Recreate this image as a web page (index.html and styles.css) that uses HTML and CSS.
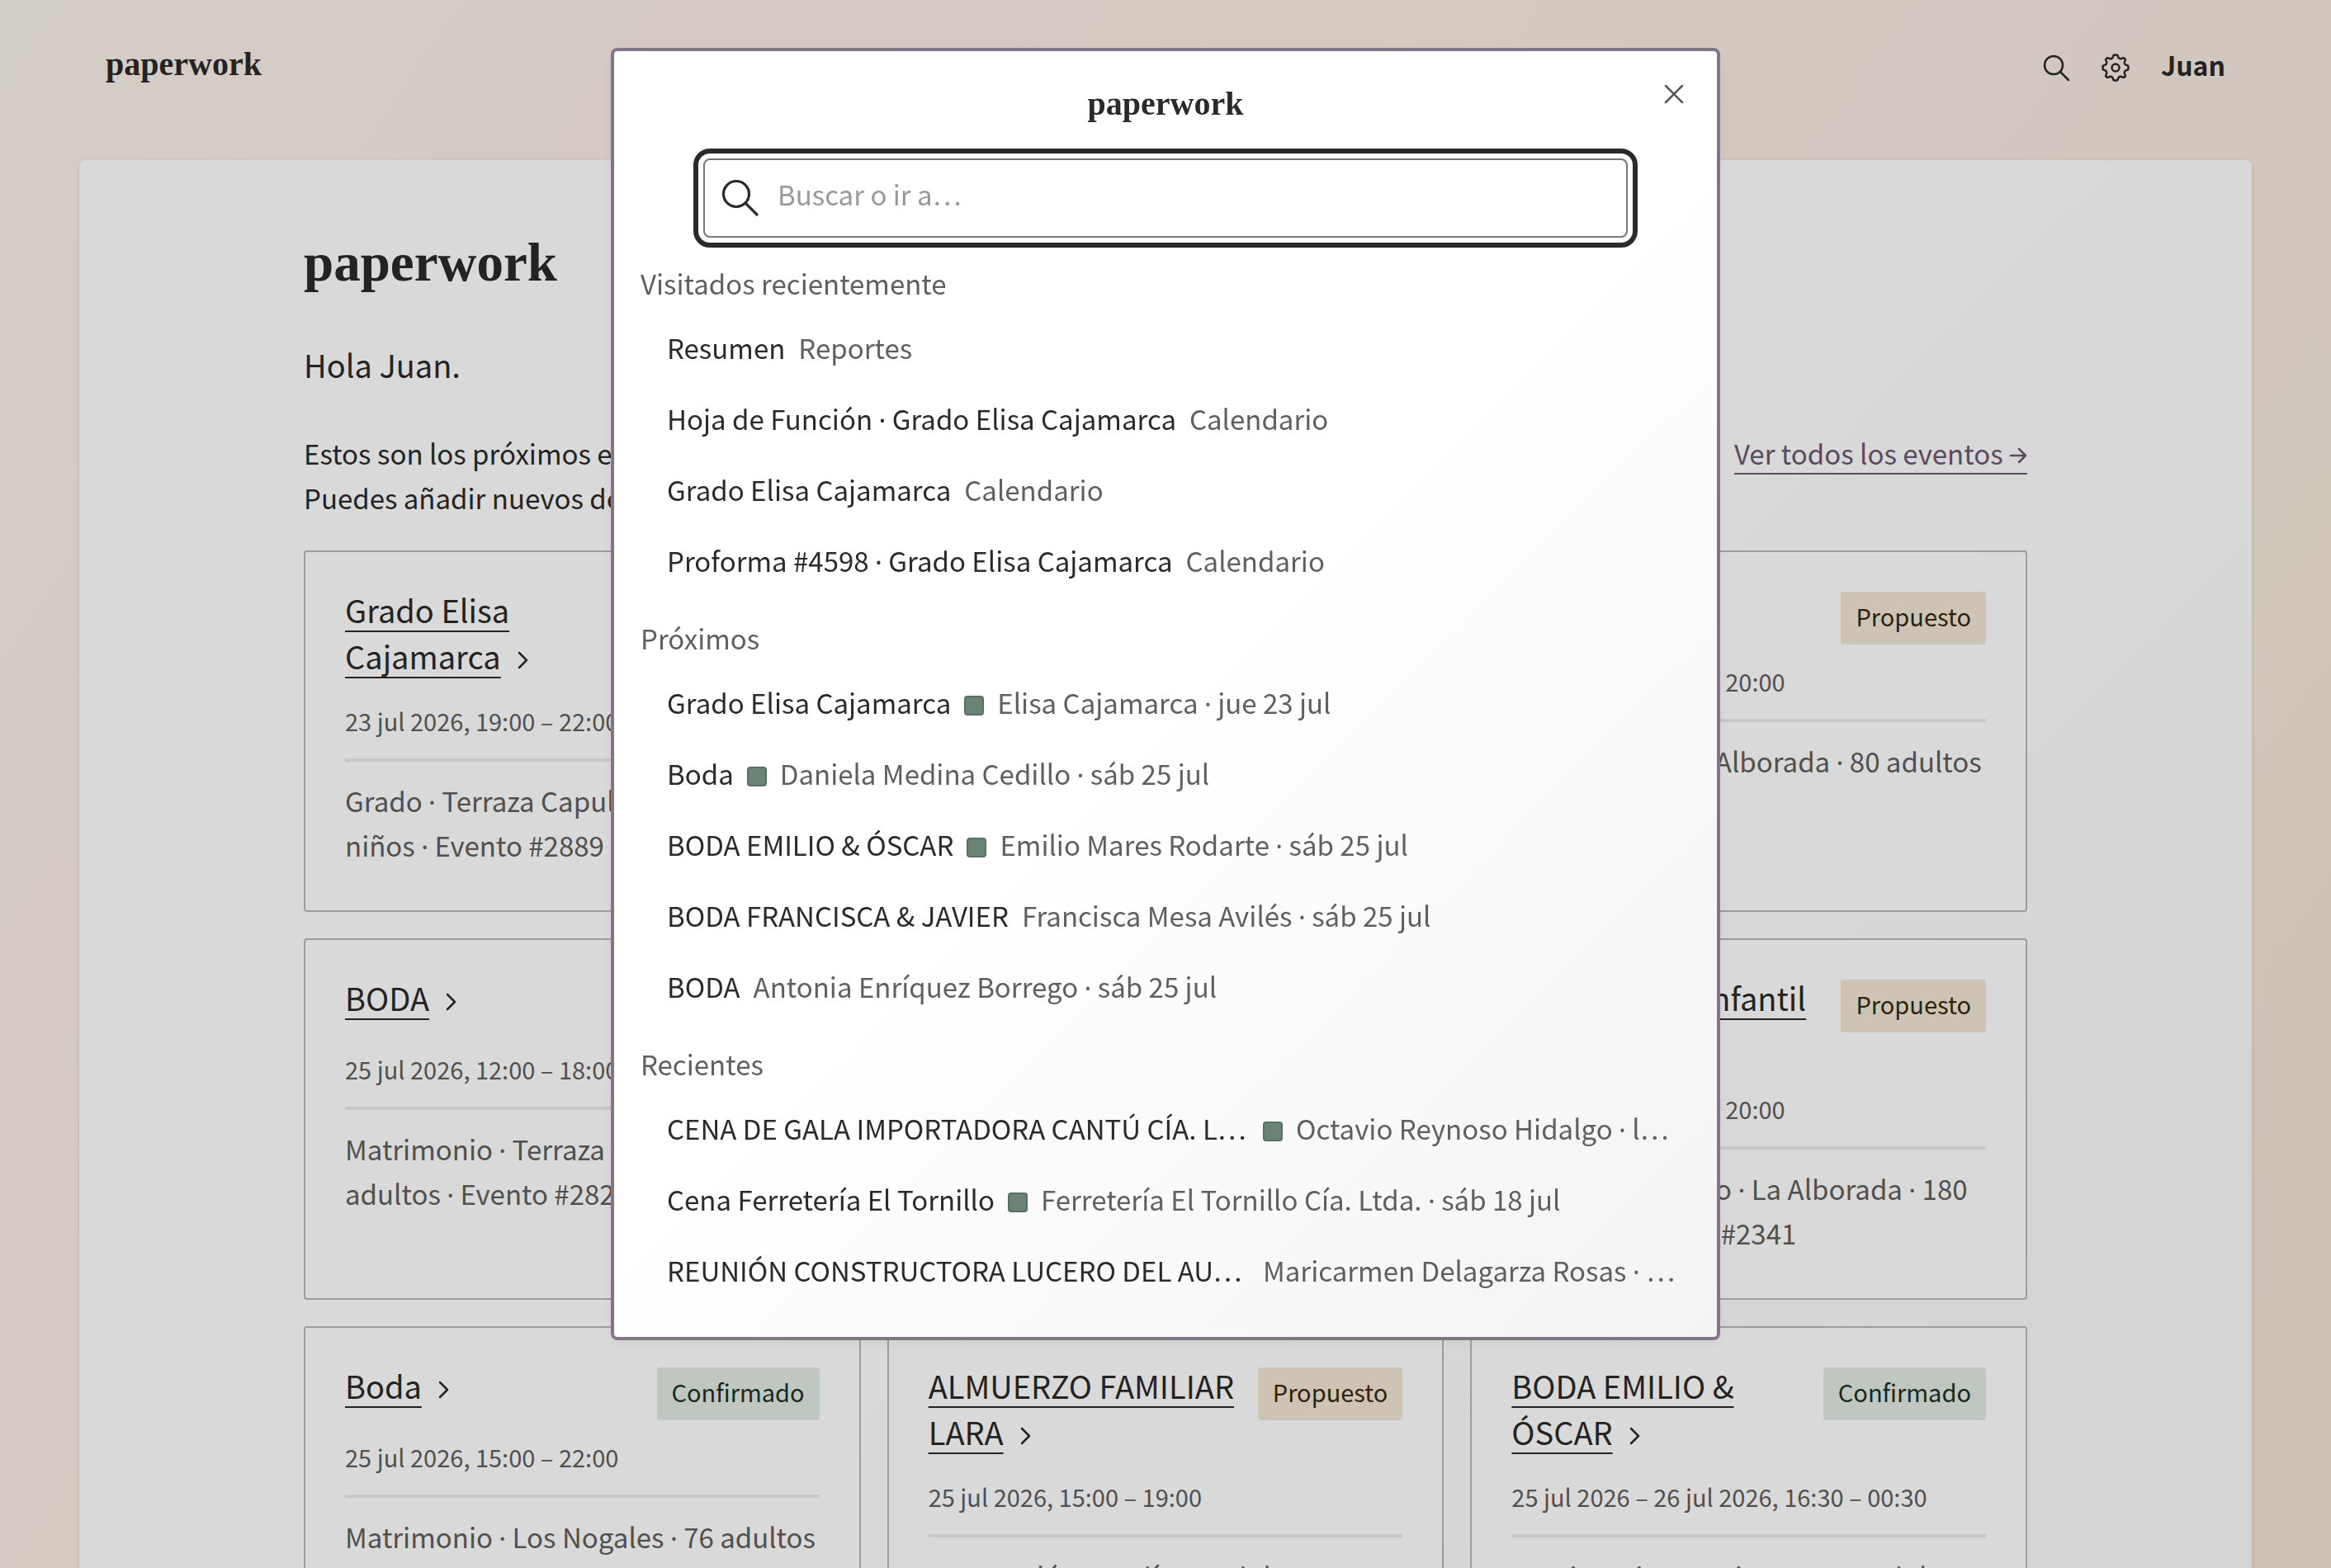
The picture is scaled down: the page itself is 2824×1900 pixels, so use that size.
FILE: index.html
```html
<!DOCTYPE html>
<html lang="es">
<head>
    <meta charset="UTF-8">
    <meta name="viewport" content="width=device-width, initial-scale=1.0">
    <title>paperwork</title>
    <link rel="stylesheet" href="styles.css">
</head>
<body>
    <header class="topbar">
        <a class="logo" href="#">paperwork</a>
        <nav class="topbar-actions">
            <button class="icon-btn" type="button" aria-label="Buscar">
                <svg width="34" height="34" viewBox="0 0 34 34"><circle cx="14" cy="14" r="11"/><path d="M22 22l10 10"/></svg>
            </button>
            <button class="icon-btn" type="button" aria-label="Ajustes">
                <svg width="34" height="34" viewBox="0 0 34 34"><path d="M14 3.5Q14.300 1.500 16 1.500H18Q19.700 1.500 20 3.500Q20.400 5.600 22.400 6.200Q24 6.600 25.300 5.600Q26.900 4.600 28.100 5.900Q29.400 7.100 28.400 8.700Q27.400 10 27.800 11.600Q28.400 13.600 30.500 14Q32.500 14.300 32.500 16V18Q32.500 19.700 30.500 20Q28.400 20.400 27.800 22.400Q27.400 24 28.400 25.300Q29.400 26.900 28.100 28.100Q26.900 29.400 25.300 28.400Q24 27.400 22.400 27.800Q20.400 28.400 20 30.500Q19.700 32.500 18 32.500H16Q14.300 32.500 14 30.500Q13.600 28.400 11.600 27.800Q10 27.400 8.700 28.400Q7.100 29.400 5.900 28.100Q4.600 26.900 5.600 25.300Q6.600 24 6.200 22.400Q5.600 20.400 3.500 20Q1.500 19.700 1.500 18V16Q1.500 14.300 3.500 14Q5.600 13.600 6.200 11.600Q6.600 10 5.600 8.700Q4.600 7.100 5.900 5.900Q7.100 4.600 8.700 5.600Q10 6.600 11.600 6.200Q13.600 5.600 14 3.500Z"/><circle cx="17" cy="17" r="4.500"/></svg>
            </button>
            <a class="user" href="#">Juan</a>
        </nav>
    </header>

    <main class="page">
        <div class="content">
            <h1 class="hero">paperwork</h1>
            <p class="greeting">Hola Juan.</p>
            <div class="intro">
                <p>Estos son los próximos eventos.<br>Puedes añadir nuevos desde aquí.</p>
                <a class="all-link" href="#">Ver todos los eventos <svg width="22" height="22" viewBox="0 0 22 22"><path d="M2 11h18M12 3l8 8-8 8"/></svg></a>
            </div>

            <div class="cards">
                <article class="card">
                    <div class="card-head">
                        <h2><a href="#">Grado Elisa Cajamarca</a><svg class="chevron" width="14" height="22" viewBox="0 0 14 22"><path d="M2 2l9 9-9 9"/></svg></h2>
                        <span class="badge confirmed">Confirmado</span>
                    </div>
                    <p class="date">23 jul 2026, 19:00 – 22:00</p>
                    <p class="detail">Grado <span class="dot">·</span> Terraza Capulí <span class="dot">·</span> 90 <span class="dot">·</span> 12<br>niños <span class="dot">·</span> Evento #2889</p>
                </article>
                <article class="card">
                    <div class="card-head">
                        <h2><a href="#">Boda</a></h2>
                        <span class="badge confirmed">Confirmado</span>
                    </div>
                    <p class="date">25 jul 2026, 12:00 – 18:00</p>
                    <p class="detail">Matrimonio <span class="dot">·</span> Los Nogales</p>
                </article>
                <article class="card">
                    <div class="card-head">
                        <h2><a href="#">Boda</a></h2>
                        <span class="badge proposed">Propuesto</span>
                    </div>
                    <p class="date">25 jul 2026, 12:00 – 20:00</p>
                    <p class="detail">Matrimonio <span class="dot">·</span> La Alborada <span class="dot">·</span> 80 adultos</p>
                </article>
                <article class="card">
                    <div class="card-head">
                        <h2><a href="#">BODA</a><svg class="chevron" width="14" height="22" viewBox="0 0 14 22"><path d="M2 2l9 9-9 9"/></svg></h2>
                        <span class="badge proposed">Propuesto</span>
                    </div>
                    <p class="date">25 jul 2026, 12:00 – 18:00</p>
                    <p class="detail">Matrimonio <span class="dot">·</span> Terraza Capulí <span class="dot">·</span> 60<br>adultos <span class="dot">·</span> Evento #2821</p>
                </article>
                <article class="card">
                    <div class="card-head">
                        <h2><a href="#">Boda</a></h2>
                        <span class="badge proposed">Propuesto</span>
                    </div>
                    <p class="date">25 jul 2026, 12:00 – 18:00</p>
                    <p class="detail">Matrimonio <span class="dot">·</span> Los Nogales</p>
                </article>
                <article class="card">
                    <div class="card-head">
                        <h2><a href="#">Cumpleaños Infantil Zoe</a></h2>
                        <span class="badge proposed">Propuesto</span>
                    </div>
                    <p class="date">25 jul 2026, 15:00 – 20:00</p>
                    <p class="detail">Evento Deportivo <span class="dot">·</span> La Alborada <span class="dot">·</span> 180<br>adultos <span class="dot">·</span> Evento #2341</p>
                </article>
                <article class="card">
                    <div class="card-head">
                        <h2><a href="#">Boda</a><svg class="chevron" width="14" height="22" viewBox="0 0 14 22"><path d="M2 2l9 9-9 9"/></svg></h2>
                        <span class="badge confirmed">Confirmado</span>
                    </div>
                    <p class="date">25 jul 2026, 15:00 – 22:00</p>
                    <p class="detail">Matrimonio <span class="dot">·</span> Los Nogales <span class="dot">·</span> 76 adultos</p>
                </article>
                <article class="card">
                    <div class="card-head">
                        <h2><a href="#">ALMUERZO FAMILIAR LARA</a><svg class="chevron" width="14" height="22" viewBox="0 0 14 22"><path d="M2 2l9 9-9 9"/></svg></h2>
                        <span class="badge proposed">Propuesto</span>
                    </div>
                    <p class="date">25 jul 2026, 15:00 – 19:00</p>
                    <p class="detail">Otro <span class="dot">·</span> Salón Gandí <span class="dot">·</span> 75 adultos</p>
                </article>
                <article class="card">
                    <div class="card-head">
                        <h2><a href="#">BODA EMILIO &amp; ÓSCAR</a><svg class="chevron" width="14" height="22" viewBox="0 0 14 22"><path d="M2 2l9 9-9 9"/></svg></h2>
                        <span class="badge confirmed">Confirmado</span>
                    </div>
                    <p class="date">25 jul 2026 – 26 jul 2026, 16:30 – 00:30</p>
                    <p class="detail">Matrimonio <span class="dot">·</span> La Higuera <span class="dot">·</span> 90 adultos</p>
                </article>
            </div>
        </div>
    </main>

    <div class="overlay">
        <div class="modal" role="dialog" aria-label="Buscar">
            <button class="close-btn" type="button" aria-label="Cerrar">
                <svg width="24" height="24" viewBox="0 0 24 24"><path d="M2 2l20 20M22 2L2 22"/></svg>
            </button>
            <div class="logo modal-logo">paperwork</div>
            <label class="search-box">
                <svg width="46" height="46" viewBox="0 0 46 46"><circle cx="18" cy="18" r="15.5"/><path d="M29 29l14 14"/></svg>
                <input type="text" placeholder="Buscar o ir a…" aria-label="Buscar o ir a">
            </label>

            <section class="group">
                <h3>Visitados recientemente</h3>
                <a class="result" href="#"><span class="name">Resumen</span><span class="meta">Reportes</span></a>
                <a class="result" href="#"><span class="name">Hoja de Función <span class="dot">·</span> Grado Elisa Cajamarca</span><span class="meta">Calendario</span></a>
                <a class="result" href="#"><span class="name">Grado Elisa Cajamarca</span><span class="meta">Calendario</span></a>
                <a class="result" href="#"><span class="name">Proforma #4598 <span class="dot">·</span> Grado Elisa Cajamarca</span><span class="meta">Calendario</span></a>
            </section>
            <section class="group">
                <h3>Próximos</h3>
                <a class="result" href="#"><span class="name">Grado Elisa Cajamarca</span><span class="status"></span><span class="meta">Elisa Cajamarca <span class="dot">·</span> jue 23 jul</span></a>
                <a class="result" href="#"><span class="name">Boda</span><span class="status"></span><span class="meta">Daniela Medina Cedillo <span class="dot">·</span> sáb 25 jul</span></a>
                <a class="result" href="#"><span class="name">BODA EMILIO &amp; ÓSCAR</span><span class="status"></span><span class="meta">Emilio Mares Rodarte <span class="dot">·</span> sáb 25 jul</span></a>
                <a class="result" href="#"><span class="name">BODA FRANCISCA &amp; JAVIER</span><span class="meta">Francisca Mesa Avilés <span class="dot">·</span> sáb 25 jul</span></a>
                <a class="result" href="#"><span class="name">BODA</span><span class="meta">Antonia Enríquez Borrego <span class="dot">·</span> sáb 25 jul</span></a>
            </section>
            <section class="group">
                <h3>Recientes</h3>
                <a class="result" href="#"><span class="name long">CENA DE GALA IMPORTADORA CANTÚ CÍA. L…</span><span class="status"></span><span class="meta">Octavio Reynoso Hidalgo <span class="dot">·</span> l…</span></a>
                <a class="result" href="#"><span class="name">Cena Ferretería El Tornillo</span><span class="status"></span><span class="meta">Ferretería El Tornillo Cía. Ltda. <span class="dot">·</span> sáb 18 jul</span></a>
                <a class="result" href="#"><span class="name long">REUNIÓN CONSTRUCTORA LUCERO DEL AU…</span><span class="meta">Maricarmen Delagarza Rosas <span class="dot">·</span> …</span></a>
            </section>
        </div>
    </div>
</body>
</html>
```

FILE: styles.css
```css
* {
    box-sizing: border-box;
}
body {
    margin: 0;
    height: 100vh;
    overflow: hidden;
    font-family: "Noto Sans CJK KR", "Noto Sans", sans-serif;
    font-size: 33px;
    line-height: 54px;
    color: #2b2a29;
    background: linear-gradient(125deg, #f6f2e8 0%, #faf1e9 4%, #f9ede6 25%, #faeee2 42%, #f7eae3 60%, #f5eadc 78%, #f4e4d6 92%, #f2e4d4 100%);
}
h1, h2, h3, p {
    margin: 0;
    font-weight: 400;
}
a {
    color: inherit;
    text-decoration: none;
}
button {
    padding: 0;
    border: 0;
    background: none;
    color: inherit;
}
svg {
    fill: none;
    stroke: currentColor;
    stroke-width: 2.5;
    stroke-linecap: round;
    stroke-linejoin: round;
}
.logo {
    font-family: "Liberation Serif", serif;
    font-size: 40px;
    font-weight: 700;
    line-height: 56px;
}
.dot {
    font-family: "Noto Sans", sans-serif;
    line-height: 1;
}

/* top bar */
.topbar {
    display: flex;
    justify-content: space-between;
    align-items: center;
    padding: 50px 128px 88px;
}
.topbar-actions {
    display: flex;
    align-items: center;
    gap: 38px;
}
.icon-btn {
    display: flex;
    padding-top: 8px;
}
.user {
    font-size: 32px;
    font-weight: 700;
}

/* page */
.page {
    margin: 0 96px;
    padding: 84px 96px 96px;
    border-radius: 8px;
    background: linear-gradient(135deg, #fff 50%, #f8f8f8 100%);
    box-shadow: 0 2px 6px rgba(0, 0, 0, 0.12);
}
.content {
    max-width: 2088px;
    margin: 0 auto;
}
.hero {
    font-family: "Liberation Serif", serif;
    font-size: 65px;
    font-weight: 700;
    line-height: 80px;
}
.greeting {
    margin: 56px 0 52px;
    font-size: 38px;
    line-height: 56px;
}
.intro {
    display: flex;
    justify-content: space-between;
    align-items: flex-start;
    margin-bottom: 37px;
}
.all-link {
    margin-top: 3px;
    color: #6b5870;
    line-height: 48px;
    border-bottom: 2px solid #6b5870;
}

/* event cards */
.cards {
    display: grid;
    grid-template-columns: repeat(3, 1fr);
    grid-auto-rows: 1fr;
    gap: 32px;
}
.card {
    padding: 48px 48px 52px;
    border: 2px solid #bab8bc;
    border-radius: 4px;
    background: #fff;
}
.card-head {
    display: flex;
    justify-content: space-between;
    align-items: flex-start;
    gap: 24px;
    min-height: 64px;
}
.card h2 {
    margin: -6px 0 6px;
    font-size: 38px;
    line-height: 56px;
}
.card h2 a {
    text-decoration: underline;
    text-decoration-thickness: 2px;
    text-decoration-skip-ink: none;
    text-underline-offset: 9px;
}
.chevron {
    margin-left: 20px;
}
.badge {
    flex: none;
    height: 64px;
    padding: 0 18px;
    border-radius: 4px;
    font-size: 29px;
    line-height: 58px;
}
.confirmed {
    color: #1a3022;
    background: #e1eae2;
}
.proposed {
    color: #36290e;
    background: #f3e7d6;
}
.date {
    margin-top: 20px;
    padding-bottom: 22px;
    border-bottom: 4px solid #eaeaea;
    font-size: 29px;
    line-height: 48px;
    color: #5f5e5d;
}
.detail {
    margin-top: 20px;
    color: #5f5e5d;
}

/* search dialog */
.overlay {
    position: fixed;
    inset: 0;
    display: flex;
    justify-content: center;
    align-items: flex-start;
    padding-top: 58px;
    background: rgba(0, 0, 0, 0.15);
}
.modal {
    position: relative;
    width: 1344px;
    max-width: 100%;
    padding: 36px 32px 38px;
    border: 4px solid #85738a;
    border-radius: 8px;
    background: linear-gradient(135deg, #fff 50%, #f3f3f3 100%);
    box-shadow: 0 4px 16px rgba(0, 0, 0, 0.05);
}
.close-btn {
    position: absolute;
    top: 40px;
    right: 40px;
    display: flex;
    color: #555;
}
.modal-logo {
    text-align: center;
}
.search-box {
    display: flex;
    align-items: center;
    gap: 22px;
    height: 96px;
    margin: 38px 76px 28px;
    padding: 0 20px;
    border: 2px solid #777;
    border-radius: 8px;
    outline: 6px solid #2b2a29;
    outline-offset: 6px;
    background: #fff;
}
.search-box svg {
    flex: none;
    stroke-width: 3.2;
}
.search-box input {
    flex: 1;
    min-width: 0;
    padding: 0 0 10px;
    border: 0;
    outline: 0;
    background: none;
    font: inherit;
    color: inherit;
}
.search-box input::placeholder {
    color: #999;
    opacity: 1;
}
.group + .group {
    margin-top: 24px;
}
.group h3 {
    margin-bottom: 8px;
    font-size: 33px;
    color: #5f5f5f;
}
.result {
    display: flex;
    align-items: center;
    gap: 16px;
    padding: 16px 16px 16px 32px;
}
.name, .meta {
    min-width: 0;
    overflow: hidden;
    white-space: nowrap;
    text-overflow: ellipsis;
}
.long {
    flex: 0 0 706px;
}
.meta {
    color: #5f5f5f;
}
.status {
    flex: none;
    width: 24px;
    height: 24px;
    margin-top: 8px;
    border: 2px solid #587060;
    border-radius: 4px;
    background: #6a8374;
}
```
